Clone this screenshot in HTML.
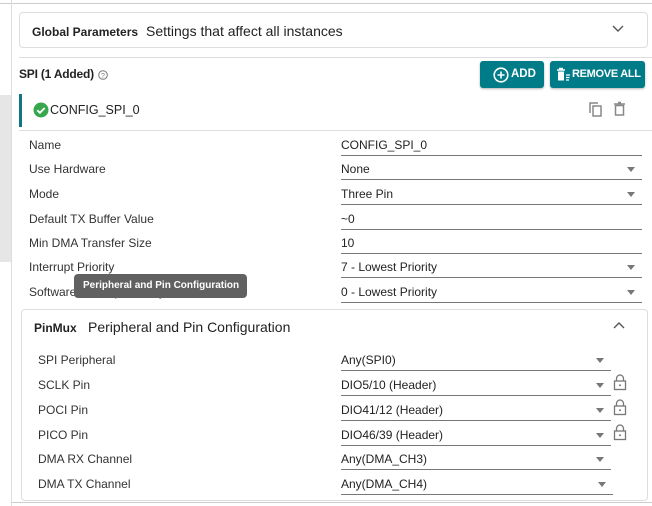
<!DOCTYPE html>
<html><head><style>
*{margin:0;padding:0;box-sizing:border-box}
body{width:652px;height:506px;background:#fff;font-family:"Liberation Sans",Arial,sans-serif;color:#333;position:relative;overflow:hidden;font-size:12px}
.a{position:absolute}
.lbl{position:absolute;font-size:12px;color:#333}
.val{position:absolute;font-size:12px;color:#222;border-bottom:1px solid #777;height:20px;padding-top:2px}
.dd{position:absolute;width:0;height:0;border-left:4px solid transparent;border-right:4px solid transparent;border-top:5px solid #777}
</style></head><body>
<div class="a" style="left:0;top:3px;width:11px;height:1px;background:#ccc"></div>
<div class="a" style="left:0;top:95px;width:11px;height:167px;background:#e6e6e6"></div>
<div class="a" style="left:11px;top:0;width:1px;height:506px;background:#ddd"></div>
<div class="a" style="left:12px;top:3px;width:640px;height:1px;background:#ccc"></div>
<div class="a" style="left:12px;top:502px;width:640px;height:1px;background:#ccc"></div>

<div class="a" style="left:19px;top:12px;width:629px;height:36px;border:1px solid #ddd;border-radius:4px"></div>
<div class="a" style="left:32px;top:25px;font-size:12px;font-weight:bold;color:#222">Global Parameters</div>
<div class="a" style="left:146px;top:23px;font-size:14px;color:#222">Settings that affect all instances</div>
<svg class="a" style="left:612px;top:25px" width="12" height="8"><path d="M1 1l5 5 5-5" fill="none" stroke="#555" stroke-width="1.4"/></svg>
<div class="a" style="left:19px;top:57px;width:633px;height:1px;background:#ddd"></div>

<div class="a" style="left:19px;top:67px;font-size:12px;font-weight:bold;color:#222;letter-spacing:-0.2px">SPI (1 Added)</div>
<svg class="a" style="left:98px;top:70px" width="10" height="10"><circle cx="5" cy="5" r="4.3" fill="none" stroke="#777" stroke-width="1"/><text x="5" y="7.8" font-size="7" text-anchor="middle" fill="#777" font-family="Liberation Sans">?</text></svg>

<div class="a" style="left:480px;top:61px;width:64px;height:27px;background:#007c88;border-radius:3px;box-shadow:0 1px 2px rgba(0,0,0,.3)"></div>
<svg class="a" style="left:493px;top:67px" width="16" height="16"><circle cx="8" cy="8" r="6.8" fill="none" stroke="#fff" stroke-width="1.6"/><path d="M8 4.5v7M4.5 8h7" stroke="#fff" stroke-width="1.6"/></svg>
<div class="a" style="left:511px;top:68px;color:#fff;font-weight:bold;font-size:11.5px">ADD</div>
<div class="a" style="left:550px;top:61px;width:95px;height:27px;background:#007c88;border-radius:3px;box-shadow:0 1px 2px rgba(0,0,0,.3)"></div>
<svg class="a" style="left:555px;top:67px" width="16" height="15"><path d="M2 3h8M4 1.5h4" stroke="#fff" stroke-width="1.5"/><rect x="3" y="4.5" width="6" height="9" fill="#fff"/><path d="M11 8h4M11 10.5h3.5M11 13h3" stroke="#fff" stroke-width="1.3"/></svg>
<div class="a" style="left:572px;top:68px;color:#fff;font-weight:bold;font-size:11px;letter-spacing:-0.3px;white-space:nowrap">REMOVE ALL</div>

<div class="a" style="left:19px;top:94px;width:3px;height:33px;background:#127585"></div>
<svg class="a" style="left:33px;top:102px" width="16" height="16"><circle cx="8" cy="8" r="7.5" fill="#36a74c"/><path d="M4.3 8.2l2.6 2.6 4.8-4.8" fill="none" stroke="#fff" stroke-width="1.8"/></svg>
<div class="a" style="left:50px;top:103px;font-size:12.5px;color:#222">CONFIG_SPI_0</div>
<svg class="a" style="left:588px;top:101px" width="16" height="17"><path d="M2 12V2h8" fill="none" stroke="#888" stroke-width="1.5"/><rect x="5" y="5" width="8" height="10" fill="none" stroke="#888" stroke-width="1.5"/></svg>
<svg class="a" style="left:613px;top:101px" width="14" height="16"><path d="M1 3h11M5 1.5h3" stroke="#888" stroke-width="1.5"/><rect x="2.5" y="4.5" width="8" height="9.5" fill="none" stroke="#888" stroke-width="1.5"/></svg>
<div class="a" style="left:19px;top:130px;width:633px;height:1px;background:#ddd"></div>

<div class="lbl" style="left:29px;top:138px">Name</div>
<div class="lbl" style="left:29px;top:162px">Use Hardware</div>
<div class="lbl" style="left:29px;top:187px">Mode</div>
<div class="lbl" style="left:29px;top:212px">Default TX Buffer Value</div>
<div class="lbl" style="left:29px;top:236px">Min DMA Transfer Size</div>
<div class="lbl" style="left:29px;top:260px">Interrupt Priority</div>
<div class="lbl" style="left:29px;top:285px">Software Interrupt Priority</div>

<div class="val" style="left:341px;top:136px;width:301px">CONFIG_SPI_0</div>
<div class="val" style="left:341px;top:160px;width:301px">None</div>
<div class="val" style="left:341px;top:185px;width:301px">Three Pin</div>
<div class="val" style="left:341px;top:210px;width:301px">~0</div>
<div class="val" style="left:341px;top:234px;width:301px">10</div>
<div class="val" style="left:341px;top:258px;width:301px">7 - Lowest Priority</div>
<div class="val" style="left:341px;top:283px;width:301px">0 - Lowest Priority</div>
<div class="dd" style="left:627px;top:167px"></div>
<div class="dd" style="left:627px;top:192px"></div>
<div class="dd" style="left:627px;top:265px"></div>
<div class="dd" style="left:627px;top:290px"></div>

<div class="a" style="left:74px;top:274px;width:173px;height:24px;background:#616161;border-radius:4px;color:#fff;font-size:10px;font-weight:bold;padding:6px 0 0 9px">Peripheral and Pin Configuration</div>

<div class="a" style="left:21px;top:309px;width:627px;height:192px;border:1px solid #ddd;border-radius:4px"></div>
<div class="a" style="left:34px;top:321px;font-size:12px;font-weight:bold;color:#222">PinMux</div>
<div class="a" style="left:88px;top:319px;font-size:14px;color:#222">Peripheral and Pin Configuration</div>
<svg class="a" style="left:613px;top:321px" width="12" height="8"><path d="M1 7l5-5 5 5" fill="none" stroke="#555" stroke-width="1.4"/></svg>

<div class="lbl" style="left:38px;top:353px">SPI Peripheral</div>
<div class="lbl" style="left:38px;top:378px">SCLK Pin</div>
<div class="lbl" style="left:38px;top:403px">POCI Pin</div>
<div class="lbl" style="left:38px;top:428px">PICO Pin</div>
<div class="lbl" style="left:38px;top:452px">DMA RX Channel</div>
<div class="lbl" style="left:38px;top:477px">DMA TX Channel</div>

<div class="val" style="left:341px;top:351px;width:270px">Any(SPI0)</div>
<div class="val" style="left:341px;top:376px;width:270px">DIO5/10 (Header)</div>
<div class="val" style="left:341px;top:401px;width:270px">DIO41/12 (Header)</div>
<div class="val" style="left:341px;top:426px;width:270px">DIO46/39 (Header)</div>
<div class="val" style="left:341px;top:450px;width:270px">Any(DMA_CH3)</div>
<div class="val" style="left:341px;top:475px;width:272px">Any(DMA_CH4)</div>
<div class="dd" style="left:596px;top:358px"></div>
<div class="dd" style="left:596px;top:383px"></div>
<div class="dd" style="left:596px;top:408px"></div>
<div class="dd" style="left:596px;top:433px"></div>
<div class="dd" style="left:596px;top:457px"></div>
<div class="dd" style="left:598px;top:482px"></div>
<svg class="a" style="left:613px;top:374px" width="14" height="17"><path d="M3.5 7V4.5a3.5 3.5 0 0 1 7 0V7" fill="none" stroke="#777" stroke-width="1.3"/><rect x="1.5" y="7" width="11" height="8.5" fill="none" stroke="#777" stroke-width="1.3"/><circle cx="7" cy="11.2" r="1" fill="#777"/></svg>
<svg class="a" style="left:613px;top:399px" width="14" height="17"><path d="M3.5 7V4.5a3.5 3.5 0 0 1 7 0V7" fill="none" stroke="#777" stroke-width="1.3"/><rect x="1.5" y="7" width="11" height="8.5" fill="none" stroke="#777" stroke-width="1.3"/><circle cx="7" cy="11.2" r="1" fill="#777"/></svg>
<svg class="a" style="left:613px;top:424px" width="14" height="17"><path d="M3.5 7V4.5a3.5 3.5 0 0 1 7 0V7" fill="none" stroke="#777" stroke-width="1.3"/><rect x="1.5" y="7" width="11" height="8.5" fill="none" stroke="#777" stroke-width="1.3"/><circle cx="7" cy="11.2" r="1" fill="#777"/></svg>
</body></html>
